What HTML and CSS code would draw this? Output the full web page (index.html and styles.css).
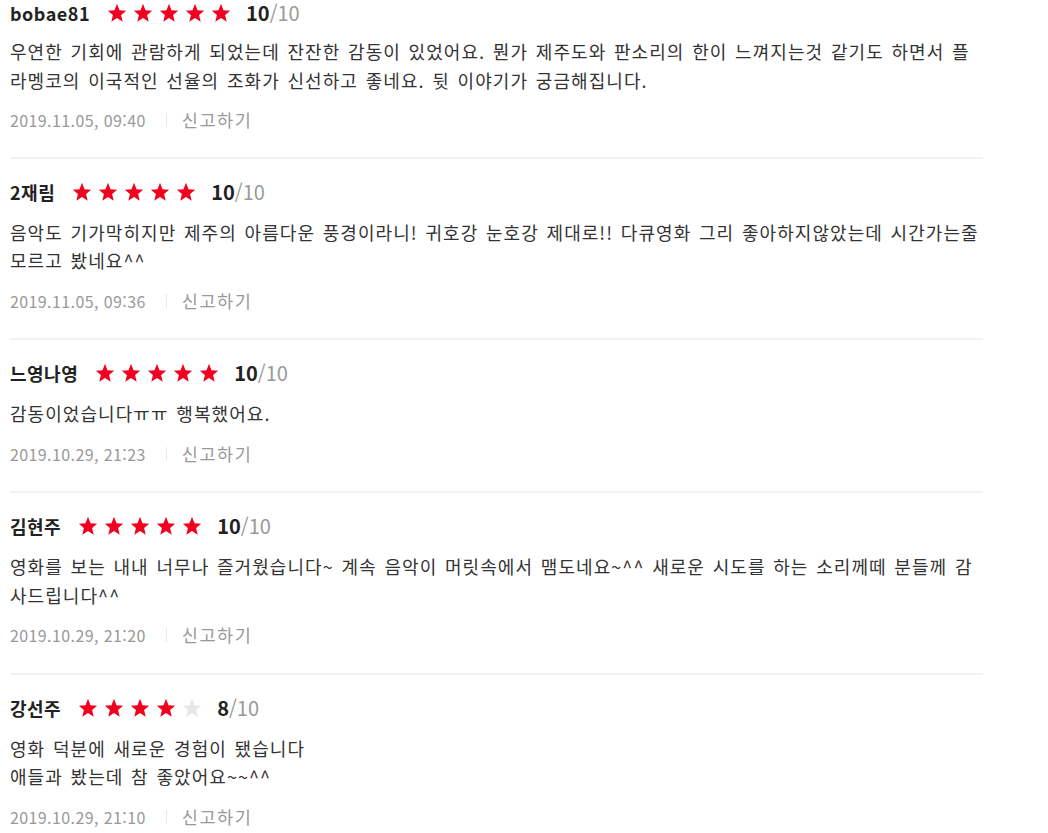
FILE: index.html
```html
<!DOCTYPE html>
<html lang="ko">
<head>
  <meta charset="UTF-8">
  <title>관람평</title>
  <link rel="stylesheet" href="styles.css">
</head>
<body>

  <svg width="0" height="0" class="defs">
    <defs>
      <polygon id="star" points="12,1 15,8.6 23,9.2 16.9,14.4 18.8,22.4 12,18.1 5.2,22.4 7.1,14.4 1,9.2 9,8.6" />
    </defs>
  </svg>

  <ul class="reviews">
    <li class="review">
      <div class="review-head">
        <strong class="name">bobae81</strong>
        <span class="stars">
          <svg class="star on" viewBox="0 0 24 24"><use href="#star"/></svg>
          <svg class="star on" viewBox="0 0 24 24"><use href="#star"/></svg>
          <svg class="star on" viewBox="0 0 24 24"><use href="#star"/></svg>
          <svg class="star on" viewBox="0 0 24 24"><use href="#star"/></svg>
          <svg class="star on" viewBox="0 0 24 24"><use href="#star"/></svg>
        </span>
        <span class="score"><b>10</b>/10</span>
      </div>
      <p class="text">우연한 기회에 관람하게 되었는데 잔잔한 감동이 있었어요. 뭔가 제주도와 판소리의 한이 느껴지는것 같기도 하면서 플라멩코의 이국적인 선율의 조화가 신선하고 좋네요. 뒷 이야기가 궁금해집니다.</p>
      <div class="meta">
        <span class="date">2019.11.05, 09:40</span>
        <a class="report" href="#">신고하기</a>
      </div>
    </li>

    <li class="review">
      <div class="review-head">
        <strong class="name">2재림</strong>
        <span class="stars">
          <svg class="star on" viewBox="0 0 24 24"><use href="#star"/></svg>
          <svg class="star on" viewBox="0 0 24 24"><use href="#star"/></svg>
          <svg class="star on" viewBox="0 0 24 24"><use href="#star"/></svg>
          <svg class="star on" viewBox="0 0 24 24"><use href="#star"/></svg>
          <svg class="star on" viewBox="0 0 24 24"><use href="#star"/></svg>
        </span>
        <span class="score"><b>10</b>/10</span>
      </div>
      <p class="text">음악도 기가막히지만 제주의 아름다운 풍경이라니! 귀호강 눈호강 제대로!! 다큐영화 그리 좋아하지않았는데 시간가는줄 모르고 봤네요^^</p>
      <div class="meta">
        <span class="date">2019.11.05, 09:36</span>
        <a class="report" href="#">신고하기</a>
      </div>
    </li>

    <li class="review">
      <div class="review-head">
        <strong class="name">느영나영</strong>
        <span class="stars">
          <svg class="star on" viewBox="0 0 24 24"><use href="#star"/></svg>
          <svg class="star on" viewBox="0 0 24 24"><use href="#star"/></svg>
          <svg class="star on" viewBox="0 0 24 24"><use href="#star"/></svg>
          <svg class="star on" viewBox="0 0 24 24"><use href="#star"/></svg>
          <svg class="star on" viewBox="0 0 24 24"><use href="#star"/></svg>
        </span>
        <span class="score"><b>10</b>/10</span>
      </div>
      <p class="text">감동이었습니다ㅠㅠ 행복했어요.</p>
      <div class="meta">
        <span class="date">2019.10.29, 21:23</span>
        <a class="report" href="#">신고하기</a>
      </div>
    </li>

    <li class="review">
      <div class="review-head">
        <strong class="name">김현주</strong>
        <span class="stars">
          <svg class="star on" viewBox="0 0 24 24"><use href="#star"/></svg>
          <svg class="star on" viewBox="0 0 24 24"><use href="#star"/></svg>
          <svg class="star on" viewBox="0 0 24 24"><use href="#star"/></svg>
          <svg class="star on" viewBox="0 0 24 24"><use href="#star"/></svg>
          <svg class="star on" viewBox="0 0 24 24"><use href="#star"/></svg>
        </span>
        <span class="score"><b>10</b>/10</span>
      </div>
      <p class="text">영화를 보는 내내 너무나 즐거웠습니다~ 계속 음악이 머릿속에서 맴도네요~^^ 새로운 시도를 하는 소리께떼 분들께 감사드립니다^^</p>
      <div class="meta">
        <span class="date">2019.10.29, 21:20</span>
        <a class="report" href="#">신고하기</a>
      </div>
    </li>

    <li class="review">
      <div class="review-head">
        <strong class="name">강선주</strong>
        <span class="stars">
          <svg class="star on" viewBox="0 0 24 24"><use href="#star"/></svg>
          <svg class="star on" viewBox="0 0 24 24"><use href="#star"/></svg>
          <svg class="star on" viewBox="0 0 24 24"><use href="#star"/></svg>
          <svg class="star on" viewBox="0 0 24 24"><use href="#star"/></svg>
          <svg class="star" viewBox="0 0 24 24"><use href="#star"/></svg>
        </span>
        <span class="score"><b>8</b>/10</span>
      </div>
      <p class="text">영화 덕분에 새로운 경험이 됐습니다<br>애들과 봤는데 참 좋았어요~~^^</p>
      <div class="meta">
        <span class="date">2019.10.29, 21:10</span>
        <a class="report" href="#">신고하기</a>
      </div>
    </li>
  </ul>

</body>
</html>
```

FILE: styles.css
```css
body {
  margin: 0;
  background: #fff;
  font-family: "Noto Sans CJK KR", "Noto Sans", sans-serif;
  color: #333;
}

.defs {
  position: absolute;
}

.reviews {
  list-style: none;
  margin: 0;
  padding: 0 0 0 10px;
  width: 973px;
}

.review {
  padding: 20px 0 25.5px;
  border-bottom: 2px solid #f2f2f2;
}

.review:first-child {
  padding-top: 0;
  padding-bottom: 24.5px;
}

.review:first-child .text {
  margin-top: 11px;
}

.review-head {
  display: flex;
  align-items: center;
  height: 26px;
  line-height: 26px;
}

.name {
  font-size: 18px;
  font-weight: 700;
  letter-spacing: 0.5px;
  color: #222;
}

.stars {
  display: flex;
  gap: 6px;
  margin-left: 17px;
}

.star {
  width: 20px;
  height: 20px;
  fill: #e6e6e6;
}

.star.on {
  fill: #f2001f;
}

.score {
  margin-left: 15px;
  font-size: 20px;
  color: #999;
}

.score b {
  color: #222;
}

.text {
  margin: 13px 0 0;
  font-size: 18px;
  line-height: 28.5px;
  letter-spacing: 1.06px;
  word-spacing: 1.6px;
  color: #333;
}

.meta {
  display: flex;
  align-items: center;
  margin-top: 14px;
  height: 24px;
}

.date {
  font-size: 16px;
  letter-spacing: 0.4px;
  color: #999;
}

.report {
  margin-left: 20px;
  padding-left: 15px;
  border-left: 1px solid #e8e8e8;
  line-height: 14px;
  font-size: 17.5px;
  letter-spacing: 1.6px;
  color: #999;
  text-decoration: none;
}
```
